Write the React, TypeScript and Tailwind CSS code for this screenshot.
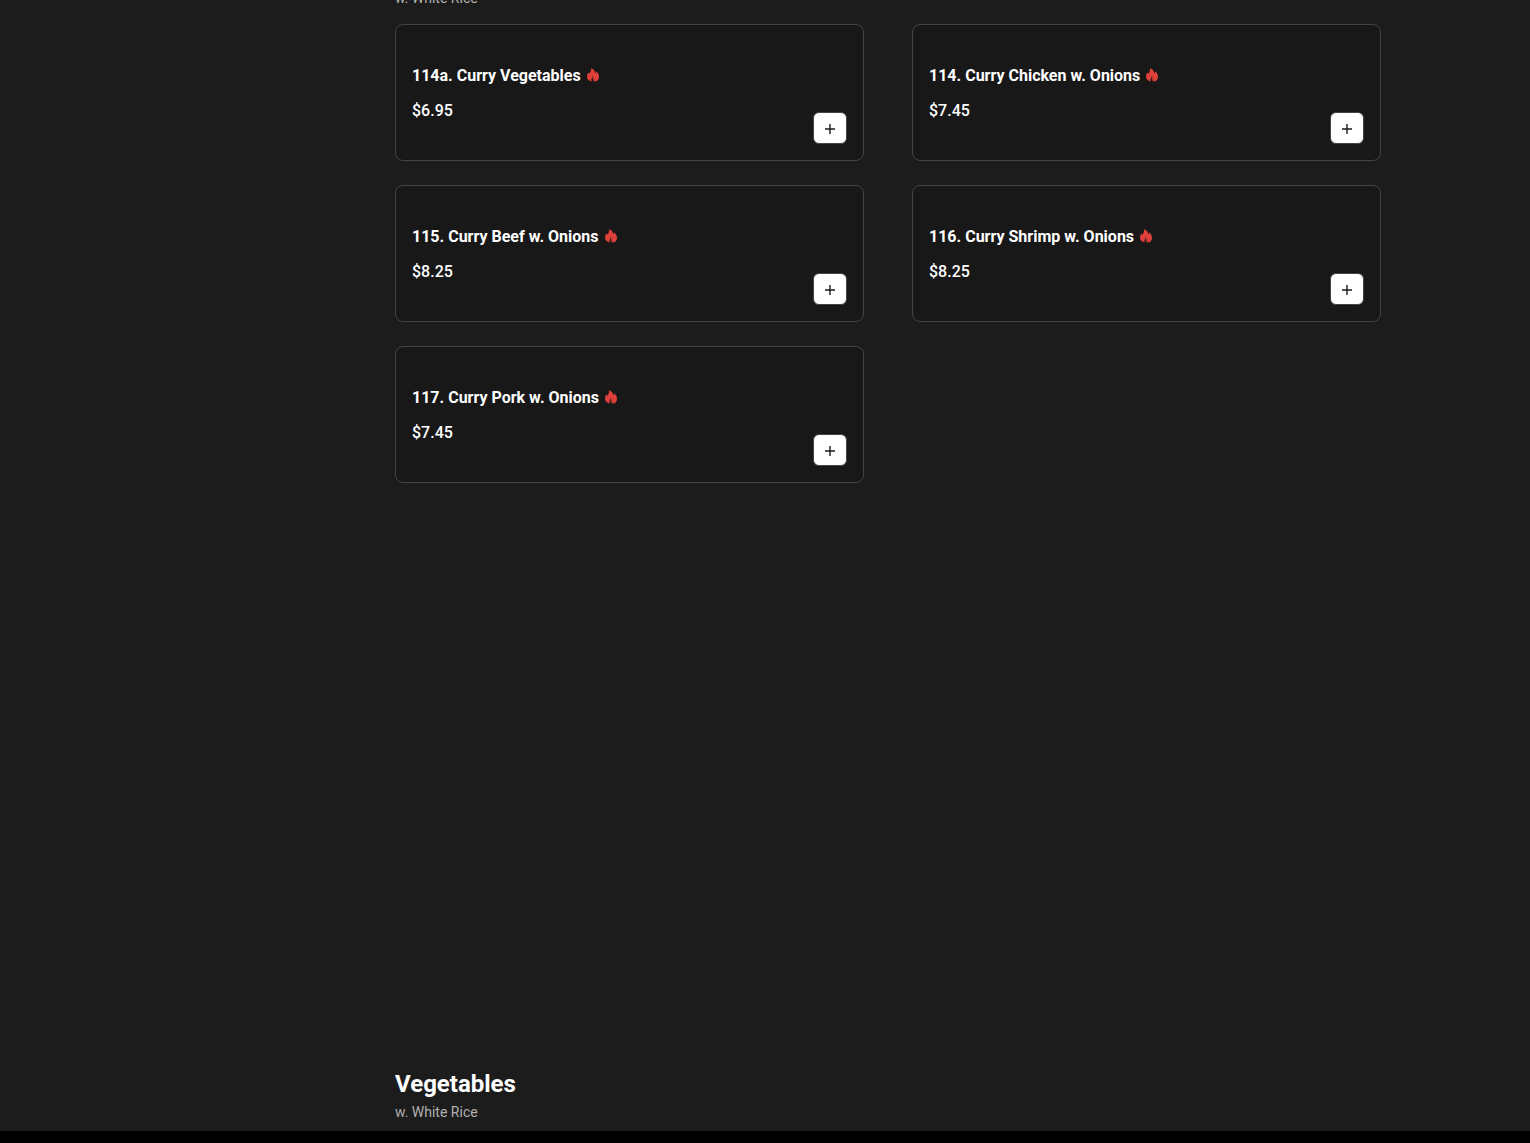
import React, { useState } from 'react'

type MenuItem = {
  name: string;
  price: number;
  spicy?: boolean;
}

const curryItems: MenuItem[] = [
  { name: '114a. Curry Vegetables', price: 6.95, spicy: true },
  { name: '114. Curry Chicken w. Onions', price: 7.45, spicy: true },
  { name: '115. Curry Beef w. Onions', price: 8.25, spicy: true },
  { name: '116. Curry Shrimp w. Onions', price: 8.25, spicy: true },
  { name: '117. Curry Pork w. Onions', price: 7.45, spicy: true },
];

function SpicyIcon() {
  return (
    <svg viewBox="0 0 12 14" className="mb-0.5 h-3.5 w-3 text-[#e0403a]" fill="currentColor" role="img" aria-label="Spicy">
      <path d="M3.9 .3C6.4 1.1 8 2.7 8.2 5C8.8 4.8 9.3 4.3 9.5 3.6C11.1 5 12 7 12 9C12 11.7 10.2 13.3 7.7 13.6C8 11.4 7.2 9.4 5.6 7.9C5.4 9.6 4 10.8 4.6 13.4C1.8 13 0 11.3 0 8.8C0 7.1 .8 5.8 1 4.4C1.6 4.7 2 5.1 2.2 5.7C3.6 4.3 4.4 2.6 3.9 .3Z" />
      <path d="M5.6 7.9C7.2 9.4 8 11.4 7.7 13.6C6.4 13.3 5.2 11.5 5.6 7.9Z" opacity=".85" />
    </svg>
  )
}

function SectionHeader({ title, note }: { title: string; note: string }) {
  return (
    <header className="flex flex-col gap-0.5">
      <h2 className="text-2xl leading-8 font-bold text-white">{title}</h2>
      <p className="text-sm text-[#b0b0b0]">{note}</p>
    </header>
  )
}

function MenuCard({ item, onAdd }: { item: MenuItem; onAdd: () => void }) {
  return (
    <li className="flex min-h-[137px] items-center justify-between rounded-lg border border-[#444444] bg-[#181818] p-4">
      <div className="flex flex-col gap-[11px] pt-0.5">
        <h3 className="flex items-center gap-1.5 font-bold text-white">
          {item.name}
          {item.spicy && <SpicyIcon />}
        </h3>
        <p className="font-medium text-white">${item.price.toFixed(2)}</p>
      </div>
      <button
        type="button"
        onClick={onAdd}
        aria-label={"Add " + item.name}
        className="flex h-8 w-[34px] items-center justify-center self-end rounded-md border border-[#444444] bg-white text-[#1a1a1a]"
      >
        <svg viewBox="0 0 10 10" className="mt-0.5 size-2.5" stroke="currentColor" strokeWidth="1.4">
          <path d="M5 0v10M0 5h10" />
        </svg>
      </button>
    </li>
  )
}

function App() {

  const [cart, setCart] = useState<MenuItem[]>([]);

  return (
    <div className="flex h-screen flex-col overflow-hidden bg-black font-['Roboto',sans-serif]">
      <main className="flex-1 bg-[#1c1c1c]">
        <div className="mx-auto flex h-full max-w-7xl px-6">
          <aside className="w-[246px] shrink-0" />
          <div className="flex flex-1 flex-col justify-between">
            {/* heading is scrolled past the top edge */}
            <section className="-mt-[46px]">
              <SectionHeader title="Curry" note="w. White Rice" />
              <ul className="mt-4 grid grid-cols-2 gap-x-12 gap-y-6">
                {curryItems.map((item) => (
                  <MenuCard key={item.name} item={item} onAdd={() => setCart([...cart, item])} />
                ))}
              </ul>
            </section>
            <section className="pb-[9px]">
              <SectionHeader title="Vegetables" note="w. White Rice" />
            </section>
          </div>
        </div>
      </main>
      <footer className="h-3" />
    </div>
  )
}

export default App
